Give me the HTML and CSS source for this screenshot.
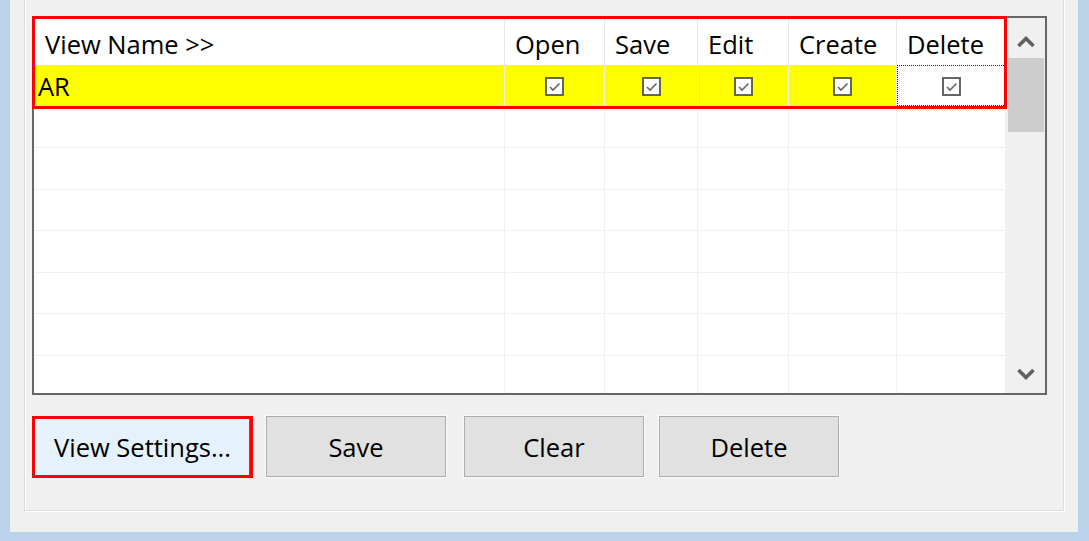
FILE: index.html
```html
<!DOCTYPE html>
<html>
<head>
<meta charset="utf-8">
<link rel="stylesheet" href="styles.css">
</head>
<body>
<div class="window">
  <div class="group">
    <div class="grid">
      <div class="table">
        <div class="row head">
          <div class="cell">View Name &gt;&gt;</div>
          <div class="cell">Open</div>
          <div class="cell">Save</div>
          <div class="cell">Edit</div>
          <div class="cell">Create</div>
          <div class="cell">Delete</div>
        </div>
        <div class="row sel">
          <div class="cell name">AR</div>
          <div class="cell chk"><svg class="cb" viewBox="0 0 19 19" width="19" height="19"><rect x="1" y="1" width="17" height="17" fill="#fff" stroke="#555" stroke-width="1.8"/><polyline points="5,10 8,13 14.5,6.5" fill="none" stroke="#666" stroke-width="1.6"/></svg></div>
          <div class="cell chk"><svg class="cb" viewBox="0 0 19 19" width="19" height="19"><rect x="1" y="1" width="17" height="17" fill="#fff" stroke="#555" stroke-width="1.8"/><polyline points="5,10 8,13 14.5,6.5" fill="none" stroke="#666" stroke-width="1.6"/></svg></div>
          <div class="cell chk"><svg class="cb" viewBox="0 0 19 19" width="19" height="19"><rect x="1" y="1" width="17" height="17" fill="#fff" stroke="#555" stroke-width="1.8"/><polyline points="5,10 8,13 14.5,6.5" fill="none" stroke="#666" stroke-width="1.6"/></svg></div>
          <div class="cell chk"><svg class="cb" viewBox="0 0 19 19" width="19" height="19"><rect x="1" y="1" width="17" height="17" fill="#fff" stroke="#555" stroke-width="1.8"/><polyline points="5,10 8,13 14.5,6.5" fill="none" stroke="#666" stroke-width="1.6"/></svg></div>
          <div class="cell chk focus"><svg class="cb" viewBox="0 0 19 19" width="19" height="19"><rect x="1" y="1" width="17" height="17" fill="#fff" stroke="#555" stroke-width="1.8"/><polyline points="5,10 8,13 14.5,6.5" fill="none" stroke="#666" stroke-width="1.6"/></svg></div>
        </div>
        <div class="row"><div class="cell"></div><div class="cell"></div><div class="cell"></div><div class="cell"></div><div class="cell"></div><div class="cell"></div></div>
        <div class="row"><div class="cell"></div><div class="cell"></div><div class="cell"></div><div class="cell"></div><div class="cell"></div><div class="cell"></div></div>
        <div class="row"><div class="cell"></div><div class="cell"></div><div class="cell"></div><div class="cell"></div><div class="cell"></div><div class="cell"></div></div>
        <div class="row"><div class="cell"></div><div class="cell"></div><div class="cell"></div><div class="cell"></div><div class="cell"></div><div class="cell"></div></div>
        <div class="row"><div class="cell"></div><div class="cell"></div><div class="cell"></div><div class="cell"></div><div class="cell"></div><div class="cell"></div></div>
        <div class="row"><div class="cell"></div><div class="cell"></div><div class="cell"></div><div class="cell"></div><div class="cell"></div><div class="cell"></div></div>
        <div class="row"><div class="cell"></div><div class="cell"></div><div class="cell"></div><div class="cell"></div><div class="cell"></div><div class="cell"></div></div>
      </div>
      <div class="scroll">
        <div class="sb-btn up"><svg viewBox="0 0 20 14" width="20" height="14"><polyline points="2.5,12 10,4.5 17.5,12" fill="none" stroke="#606060" stroke-width="3.6"/></svg></div>
        <div class="track"><div class="thumb"></div></div>
        <div class="sb-btn down"><svg viewBox="0 0 20 14" width="20" height="14"><polyline points="2.5,2 10,9.5 17.5,2" fill="none" stroke="#606060" stroke-width="3.6"/></svg></div>
      </div>
      <div class="annot grid-annot"></div>
    </div>
    <div class="buttons">
      <button class="btn focused">View Settings...</button>
      <button class="btn b-save">Save</button>
      <button class="btn b-clear">Clear</button>
      <button class="btn b-delete">Delete</button>
    </div>
  </div>
</div>
</body>
</html>
```
FILE: styles.css
```css
* { box-sizing: border-box; }
html, body { margin: 0; padding: 0; }
body {
  background: #bad2ea;
  width: 1089px;
  height: 541px;
  overflow: hidden;
  font-family: "Open Sans", "Noto Sans", sans-serif;
  color: #000;
}
.window {
  margin-left: 10px;
  width: 1068px;
  height: 532px;
  background: #f0f0f0;
  overflow: hidden;
}
.group {
  margin-left: 14px;
  margin-top: -10px;
  width: 1040px;
  height: 521px;
  border: 1px solid #dcdcdc;
  box-shadow: 1px 1px 0 #ffffff, inset 1px 1px 0 #ffffff;
  padding: 25px 0 0 7px;
}
.grid {
  position: relative;
  width: 1015px;
  height: 379px;
  border: 2px solid #666666;
  background: #ffffff;
  display: flex;
}
.table {
  width: 972px;
  height: 100%;
  overflow: hidden;
}
.row {
  display: grid;
  grid-template-columns: 471px 100px 93px 91px 108px 109px;
  height: 41.5px;
  border-bottom: 1px solid #f0f0f0;
}
.row.head {
  height: 47px;
  border-bottom: none;
}
.cell {
  border-right: 1px solid #f0f0f0;
  font-size: 25.5px;
  display: flex;
  align-items: center;
  white-space: nowrap;
}
.head .cell {
  border-right-color: #e6e6e6;
  padding-left: 10px;
  padding-top: 4px;
}
.head .cell:first-child { padding-left: 11px; }
.sel .cell { background: #ffff00; padding-top: 3px; }
.sel .name { padding-left: 4px; padding-top: 2px; }
.cell.chk { justify-content: center; }
.cell.focus {
  background: #ffffff;
  border: 1px dotted #222;
}
.cb { display: block; }
.scroll {
  width: 39px;
  height: 100%;
  background: #f0f0f0;
  display: flex;
  flex-direction: column;
}
.sb-btn {
  height: 39px;
  display: flex;
  align-items: center;
  justify-content: center;
  padding-left: 1px;
}
.sb-btn.up { padding-top: 7px; }
.sb-btn.down { padding-top: 2px; }
.track {
  flex: 1;
  padding: 1px 1px 0 2px;
}
.thumb {
  height: 74px;
  background: #cdcdcd;
}
.annot {
  position: absolute;
  border: 3px solid #ff0000;
  pointer-events: none;
}
.grid-annot {
  left: -2px;
  top: -2px;
  width: 975px;
  height: 93px;
}
.buttons {
  display: flex;
  align-items: flex-start;
  margin-top: 21px;
}
.btn {
  width: 180px;
  height: 61px;
  background: #e1e1e1;
  border: 1px solid #adadad;
  box-shadow: 0 0 0 1px #f8f8f8;
  font-family: "Open Sans", "Noto Sans", sans-serif;
  font-size: 25.5px;
  color: #000;
  padding: 0;
}
.btn.focused {
  width: 221px;
  height: 62px;
  background: #e5f1fb;
  border: 3px solid #ff0000;
  box-shadow: inset -1px 0 0 #0078d7;
}
.b-save { margin-left: 13px; }
.b-clear { margin-left: 18px; }
.b-delete { margin-left: 15px; }
```
